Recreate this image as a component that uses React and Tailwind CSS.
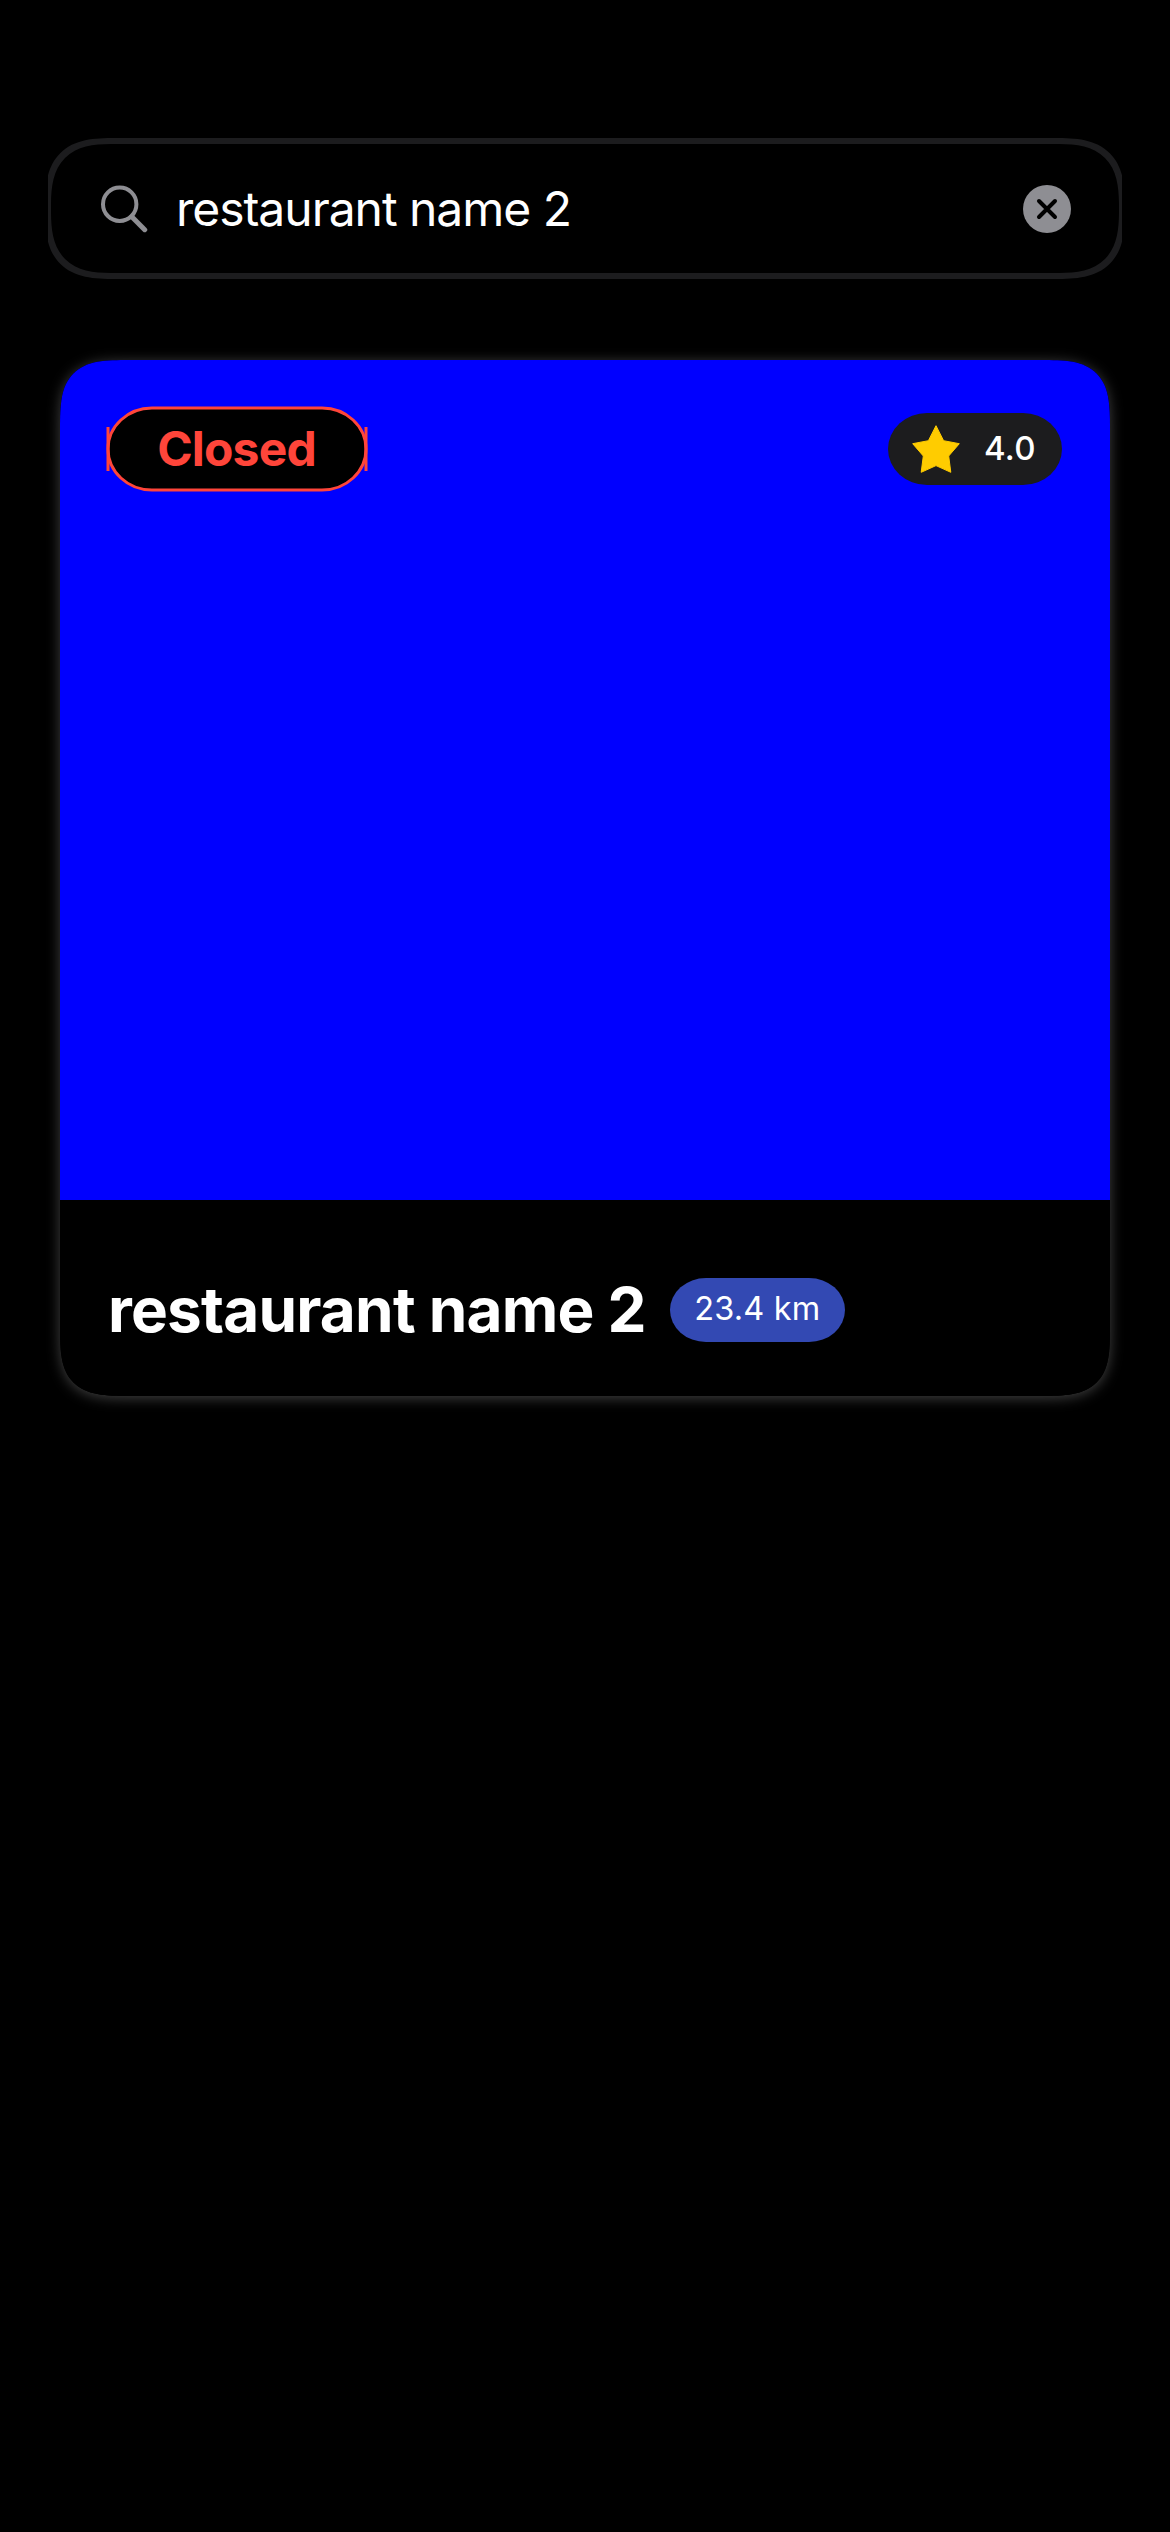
function SearchIcon() {
  return (
    <svg className="size-12 shrink-0" viewBox="0 0 48 48" fill="none" stroke="#8e8e93" aria-hidden="true">
      <circle cx="19.7" cy="19.2" r="16.7" strokeWidth="4" />
      <path d="M31.8 31.8 44.7 44.7" strokeWidth="5" strokeLinecap="round" />
    </svg>
  );
}

function ClearIcon() {
  return (
    <svg className="size-12" viewBox="0 0 48 48" aria-hidden="true">
      <circle cx="24" cy="24" r="24" fill="#8e8e93" />
      <path d="M16 16 32 32M32 16 16 32" stroke="#000" strokeWidth="4" strokeLinecap="round" />
    </svg>
  );
}

function StarIcon() {
  return (
    <svg className="size-12 shrink-0" viewBox="0 0 48 48" aria-hidden="true">
      <path
        d="M24 .7 31.6 15.7 47.3 18.7 36.7 31 38.8 47.3 24 40.6 9.2 47.3 11.3 31 .7 18.7 16.4 15.7Z"
        fill="#ffcc00"
        stroke="#ffcc00"
        strokeWidth="1"
        strokeLinejoin="round"
      />
    </svg>
  );
}

function SearchField() {
  return (
    <div className="overflow-hidden">
      <label className="-mx-[3px] flex h-[141px] items-center rounded-[70px] border-[6px] border-[#1c1c1e] pl-[49px] pr-12 [corner-shape:superellipse(1.5)]">
        <SearchIcon />
        <span className="ml-7 flex-1 text-5xl tracking-[-1.04px] text-white">restaurant name 2</span>
        <button type="button" aria-label="Clear">
          <ClearIcon />
        </button>
      </label>
    </div>
  );
}

function StatusBadge() {
  return (
    <div className="relative flex h-[86px] w-[262px] items-center justify-center">
      <svg className="absolute inset-0 size-full" viewBox="0 0 262 86" fill="none" stroke="#ff453a" strokeWidth="3" aria-hidden="true">
        <rect x="2" y="2" width="258" height="82" rx="44" ry="41" fill="#000" />
        <path d="M2 21V65M260 21V65" />
      </svg>
      <span className="relative pr-[1px] text-5xl font-bold tracking-[-0.85px] text-[#ff453a]">Closed</span>
    </div>
  );
}

function RatingBadge() {
  return (
    <div className="flex h-[72px] w-[174px] items-center rounded-[39px/36px] bg-[#1c1c1e] pl-6">
      <StarIcon />
      <span className="ml-6 text-[33px] font-medium tracking-[0.25px] text-white">4.0</span>
    </div>
  );
}

function RestaurantCard() {
  return (
    <article className="rounded-[70px] shadow-[0_2px_14px_rgba(255,255,255,0.26)] [corner-shape:superellipse(1.7)]">
      <div className="overflow-hidden rounded-[70px] bg-black [corner-shape:superellipse(1.7)]">
        <div className="flex h-[840px] items-start justify-between bg-[#0000ff] pl-[46px] pr-12 pt-[46px]">
          <StatusBadge />
          <div className="pt-[7px]">
            <RatingBadge />
          </div>
        </div>
        <div className="flex h-[196px] items-center gap-6 pl-12 pt-6">
          <h2 className="text-[62px] leading-[76px] font-bold tracking-[-0.79px] text-white">restaurant name 2</h2>
          <span className="flex h-16 w-[175px] items-center justify-center rounded-[36px/32px] bg-[#3349b3] pb-[1px] text-[32.5px] tracking-[0.15px] text-white">
            23.4 km
          </span>
        </div>
      </div>
    </article>
  );
}

export default function App() {
  return (
    <main className="min-h-[2532px] bg-black px-12 pt-[138px] font-['Inter',sans-serif]">
      <SearchField />
      <div className="mt-[81px] px-3">
        <RestaurantCard />
      </div>
    </main>
  );
}
